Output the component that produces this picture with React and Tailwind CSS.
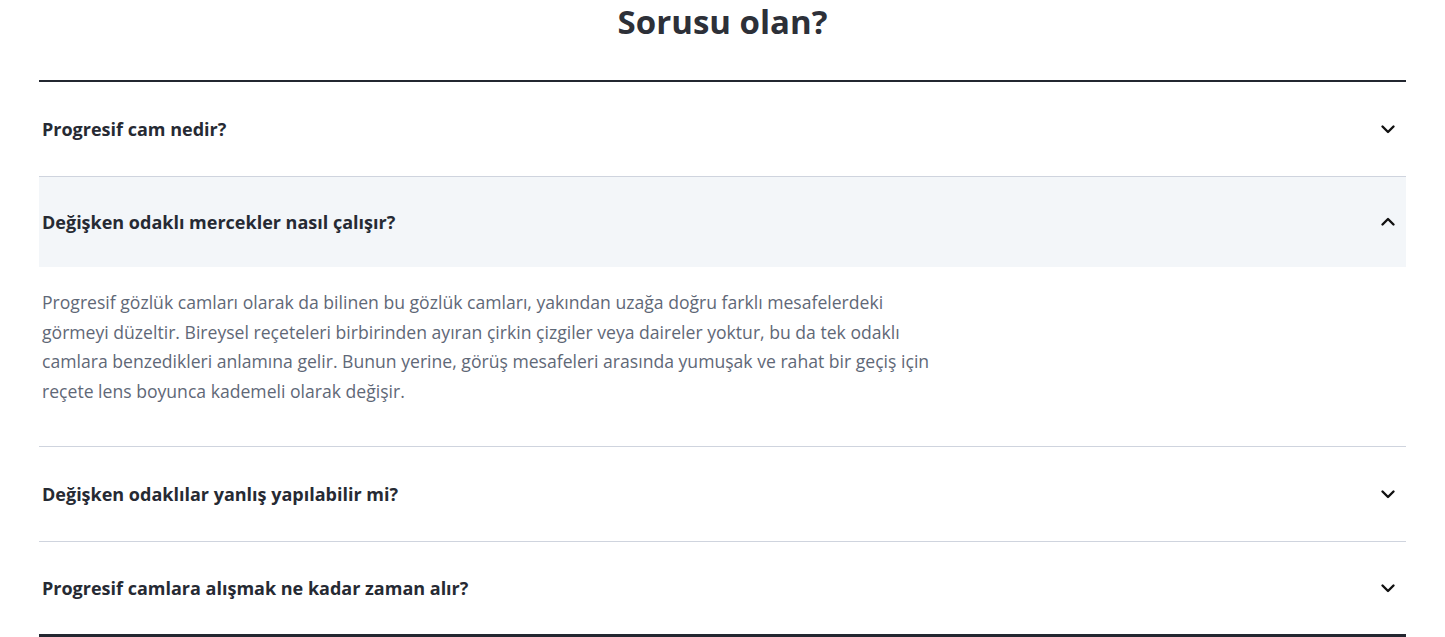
import React from "react";

const Chevron = ({ up }) => (
  <svg width="16" height="16" viewBox="0 0 16 16" fill="none" className={up ? "rotate-180" : ""}>
    <path d="M2.5 5.5L8 11l5.5-5.5" stroke="#111" strokeWidth="2.4" strokeLinecap="round" strokeLinejoin="round" />
  </svg>
);

const Row = ({ q, open, children, last }) => (
  <div className={last ? "" : "border-b border-[#cfd4de]"}>
    <div className={"flex items-center justify-between pl-[3px] pr-[10px] " + (open ? "h-[90px] bg-[#f3f6f9]" : last ? "h-[92px]" : "h-[94px]")}>
      <span className="text-[18px] font-bold text-[#262a33]">{q}</span>
      <Chevron up={open} />
    </div>
    {children}
  </div>
);

export default function App() {
  return (
    <div className="bg-white w-[1445px] h-[637px] overflow-hidden" style={{ fontFamily: '"Open Sans", "Noto Sans", sans-serif' }}>
      <div className="mx-[39px]">
        <h2 className="text-center text-[33px] font-bold text-[#2d3038] leading-[44px] h-[80px]">Sorusu olan?</h2>
        <div className="border-t-[2px] border-b-[3px] border-[#232730]">
          <Row q="Progresif cam nedir?" />
          <Row q="Değişken odaklı mercekler nasıl çalışır?" open>
            <div className="pl-[3px] pt-[21px] pb-[40px]">
              <p className="max-w-[896px] text-[17.6px] leading-[29.5px] text-[#5f6877]">
                Progresif gözlük camları olarak da bilinen bu gözlük camları, yakından uzağa doğru farklı mesafelerdeki görmeyi düzeltir. Bireysel reçeteleri birbirinden ayıran çirkin çizgiler veya daireler yoktur, bu da tek odaklı camlara benzedikleri anlamına gelir. Bunun yerine, görüş mesafeleri arasında yumuşak ve rahat bir geçiş için reçete lens boyunca kademeli olarak değişir.
              </p>
            </div>
          </Row>
          <Row q="Değişken odaklılar yanlış yapılabilir mi?" />
          <Row q="Progresif camlara alışmak ne kadar zaman alır?" last />
        </div>
      </div>
    </div>
  );
}
